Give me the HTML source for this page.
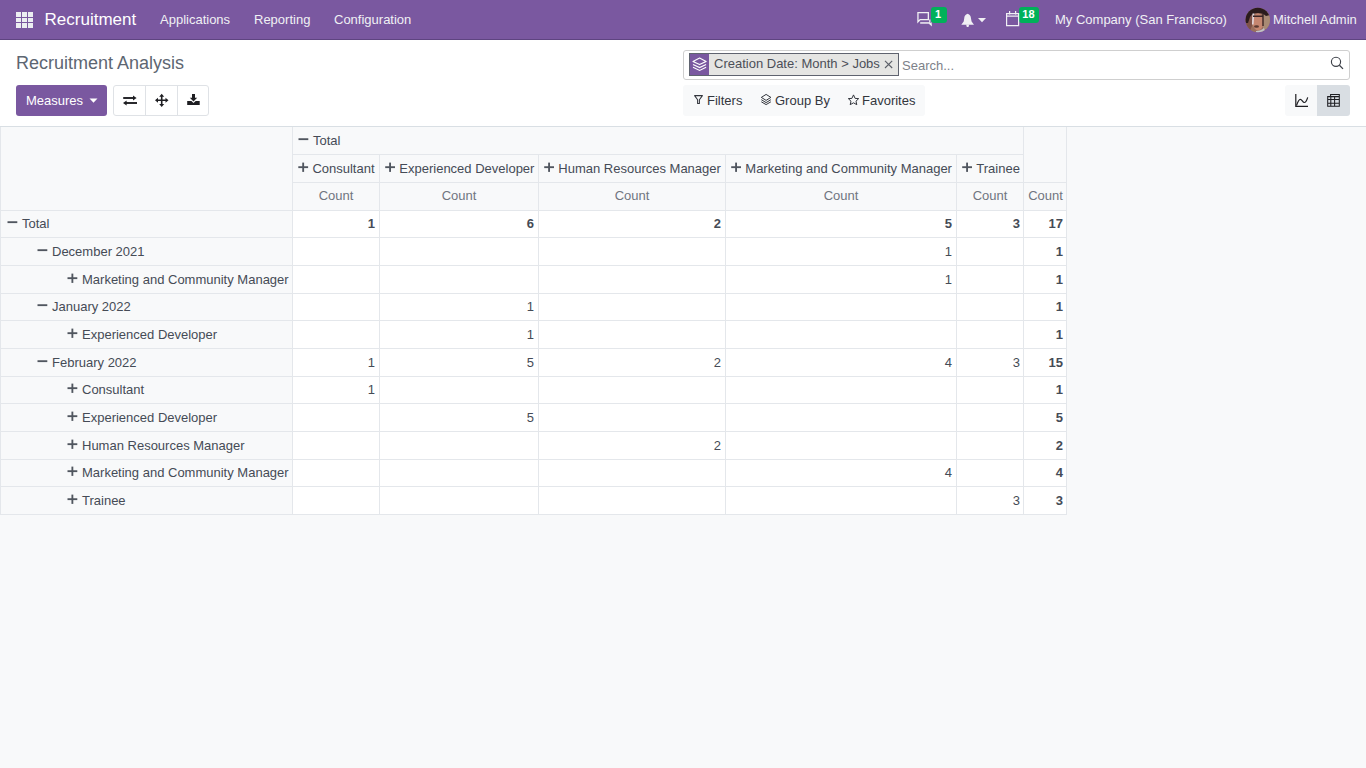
<!DOCTYPE html>
<html><head><meta charset="utf-8"><title>Recruitment Analysis</title>
<style>
html,body{margin:0;padding:0;width:1366px;height:768px;overflow:hidden;background:#f8f9fa;font-family:"Liberation Sans",sans-serif;font-size:13px;color:#454b56}
div{box-sizing:border-box}
.a{position:absolute}
.t{position:absolute;white-space:nowrap;line-height:1}
</style></head>
<body>
<div class="a" style="left:0px;top:0px;width:1366px;height:39px;background:#7a58a0"></div><div class="a" style="left:0px;top:39px;width:1366px;height:1px;background:#5e4480"></div><div class="a" style="left:16px;top:12.0px;width:5px;height:4.6px;background:#eceef2"></div><div class="a" style="left:22px;top:12.0px;width:5px;height:4.6px;background:#eceef2"></div><div class="a" style="left:28px;top:12.0px;width:5px;height:4.6px;background:#eceef2"></div><div class="a" style="left:16px;top:17.6px;width:5px;height:4.6px;background:#eceef2"></div><div class="a" style="left:22px;top:17.6px;width:5px;height:4.6px;background:#eceef2"></div><div class="a" style="left:28px;top:17.6px;width:5px;height:4.6px;background:#eceef2"></div><div class="a" style="left:16px;top:23.2px;width:5px;height:4.6px;background:#eceef2"></div><div class="a" style="left:22px;top:23.2px;width:5px;height:4.6px;background:#eceef2"></div><div class="a" style="left:28px;top:23.2px;width:5px;height:4.6px;background:#eceef2"></div><div class="t" style="left:44.6px;top:10.61px;font-size:17px;color:#fff;">Recruitment</div><div class="t" style="left:160px;top:13.00px;font-size:13px;color:#f0f0f4;">Applications</div><div class="t" style="left:254px;top:13.00px;font-size:13px;color:#f0f0f4;">Reporting</div><div class="t" style="left:334px;top:13.00px;font-size:13px;color:#f0f0f4;">Configuration</div><div class="t" style="left:1055px;top:13.00px;font-size:13px;color:#f0f0f4;">My Company (San Francisco)</div><div class="t" style="left:1273px;top:13.00px;font-size:13px;color:#f0f0f4;">Mitchell Admin</div><div class="a" style="left:930.6px;top:7px;width:16.4px;height:16px;background:#00b15a;border-radius:3px"></div><div class="t" style="left:935px;top:8.69px;font-size:11px;color:#fff;font-weight:bold">1</div><div class="a" style="left:1019px;top:7px;width:20px;height:16px;background:#00b15a;border-radius:3px"></div><div class="t" style="left:1022.3px;top:8.69px;font-size:11px;color:#fff;font-weight:bold">18</div><div class="a" style="left:0px;top:40px;width:1366px;height:86px;background:#fff"></div><div class="a" style="left:0px;top:126px;width:1366px;height:1px;background:#d9dfe4"></div><div class="t" style="left:16px;top:53.76px;font-size:18px;color:#5d6672;">Recruitment Analysis</div><div class="a" style="left:16px;top:85px;width:91px;height:31px;background:#7a58a0;border-radius:3px"></div><div class="t" style="left:26px;top:94.00px;font-size:13px;color:#fff;">Measures</div><div class="a" style="left:113px;top:85px;width:96px;height:31px;border:1px solid #dfe2e6;border-radius:3px;background:#fff"></div><div class="a" style="left:145px;top:85px;width:1px;height:31px;background:#dfe2e6"></div><div class="a" style="left:177px;top:85px;width:1px;height:31px;background:#dfe2e6"></div><div class="a" style="left:683px;top:50px;width:667px;height:30px;border:1px solid #cfcfcf;border-radius:3px;background:#fff"></div><div class="a" style="left:689px;top:53px;width:210px;height:23px;border:1px solid #5f636f;background:#e5e5e3"></div><div class="a" style="left:690px;top:54px;width:19px;height:21px;background:#7a58a0"></div><div class="t" style="left:714px;top:57.00px;font-size:13px;color:#4c4f58;">Creation Date: Month &gt; Jobs</div><div class="t" style="left:902px;top:59.00px;font-size:13px;color:#7d8189;">Search...</div><div class="a" style="left:683px;top:85px;width:242px;height:31px;background:#f8f9fa;border-radius:3px"></div><div class="t" style="left:707px;top:94.00px;font-size:13px;color:#33363d;">Filters</div><div class="t" style="left:775px;top:94.00px;font-size:13px;color:#33363d;">Group By</div><div class="t" style="left:862px;top:94.00px;font-size:13px;color:#33363d;">Favorites</div><div class="a" style="left:1285px;top:85px;width:32px;height:31px;background:#f8f9fa;border-radius:3px 0 0 3px"></div><div class="a" style="left:1317px;top:85px;width:33px;height:31px;background:#d9dee3;border-radius:0 3px 3px 0"></div><div class="a" style="left:293px;top:211px;width:773px;height:303px;background:#fff"></div><div class="a" style="left:292px;top:154px;width:732px;height:1px;background:#e4e7eb"></div><div class="a" style="left:292px;top:182px;width:775px;height:1px;background:#e4e7eb"></div><div class="a" style="left:0px;top:210px;width:1067px;height:1px;background:#e4e7eb"></div><div class="a" style="left:0px;top:237px;width:1067px;height:1px;background:#e4e7eb"></div><div class="a" style="left:0px;top:265px;width:1067px;height:1px;background:#e4e7eb"></div><div class="a" style="left:0px;top:293px;width:1067px;height:1px;background:#e4e7eb"></div><div class="a" style="left:0px;top:320px;width:1067px;height:1px;background:#e4e7eb"></div><div class="a" style="left:0px;top:348px;width:1067px;height:1px;background:#e4e7eb"></div><div class="a" style="left:0px;top:376px;width:1067px;height:1px;background:#e4e7eb"></div><div class="a" style="left:0px;top:403px;width:1067px;height:1px;background:#e4e7eb"></div><div class="a" style="left:0px;top:431px;width:1067px;height:1px;background:#e4e7eb"></div><div class="a" style="left:0px;top:459px;width:1067px;height:1px;background:#e4e7eb"></div><div class="a" style="left:0px;top:486px;width:1067px;height:1px;background:#e4e7eb"></div><div class="a" style="left:0px;top:514px;width:1067px;height:1px;background:#e4e7eb"></div><div class="a" style="left:0px;top:127px;width:1px;height:388px;background:#e4e7eb"></div><div class="a" style="left:292px;top:127px;width:1px;height:388px;background:#e4e7eb"></div><div class="a" style="left:1023px;top:127px;width:1px;height:388px;background:#e4e7eb"></div><div class="a" style="left:1066px;top:127px;width:1px;height:388px;background:#e4e7eb"></div><div class="a" style="left:379px;top:155px;width:1px;height:360px;background:#e4e7eb"></div><div class="a" style="left:538px;top:155px;width:1px;height:360px;background:#e4e7eb"></div><div class="a" style="left:725px;top:155px;width:1px;height:360px;background:#e4e7eb"></div><div class="a" style="left:956px;top:155px;width:1px;height:360px;background:#e4e7eb"></div><div class="t" style="left:313px;top:134.00px;font-size:13px;color:#454b56;">Total</div><div class="t" style="left:312.4px;top:162.00px;font-size:13px;color:#454b56;">Consultant</div><div class="t" style="left:399.3px;top:162.00px;font-size:13px;color:#454b56;">Experienced Developer</div><div class="t" style="left:558.3px;top:162.00px;font-size:13px;color:#454b56;">Human Resources Manager</div><div class="t" style="left:745.3px;top:162.00px;font-size:13px;color:#454b56;">Marketing and Community Manager</div><div class="t" style="left:976.3px;top:162.00px;font-size:13px;color:#454b56;">Trainee</div><div class="t" style="left:293px;width:86px;text-align:center;top:189.00px;font-size:13px;color:#70757f;">Count</div><div class="t" style="left:380px;width:158px;text-align:center;top:189.00px;font-size:13px;color:#70757f;">Count</div><div class="t" style="left:539px;width:186px;text-align:center;top:189.00px;font-size:13px;color:#70757f;">Count</div><div class="t" style="left:726px;width:230px;text-align:center;top:189.00px;font-size:13px;color:#70757f;">Count</div><div class="t" style="left:957px;width:66px;text-align:center;top:189.00px;font-size:13px;color:#70757f;">Count</div><div class="t" style="left:1024.5px;width:42.0px;text-align:center;top:189.00px;font-size:13px;color:#70757f;">Count</div><div class="t" style="left:22px;top:217.00px;font-size:13px;color:#454b56;">Total</div><div class="t" style="right:991px;top:217.00px;font-size:13px;color:#454b56;font-weight:bold">1</div><div class="t" style="right:832px;top:217.00px;font-size:13px;color:#454b56;font-weight:bold">6</div><div class="t" style="right:645px;top:217.00px;font-size:13px;color:#454b56;font-weight:bold">2</div><div class="t" style="right:414px;top:217.00px;font-size:13px;color:#454b56;font-weight:bold">5</div><div class="t" style="right:346px;top:217.00px;font-size:13px;color:#454b56;font-weight:bold">3</div><div class="t" style="right:303px;top:217.00px;font-size:13px;color:#454b56;font-weight:bold">17</div><div class="t" style="left:52px;top:245.00px;font-size:13px;color:#454b56;">December 2021</div><div class="t" style="right:414px;top:245.00px;font-size:13px;color:#454b56;">1</div><div class="t" style="right:303px;top:245.00px;font-size:13px;color:#454b56;font-weight:bold">1</div><div class="t" style="left:82px;top:273.00px;font-size:13px;color:#454b56;">Marketing and Community Manager</div><div class="t" style="right:414px;top:273.00px;font-size:13px;color:#454b56;">1</div><div class="t" style="right:303px;top:273.00px;font-size:13px;color:#454b56;font-weight:bold">1</div><div class="t" style="left:52px;top:300.00px;font-size:13px;color:#454b56;">January 2022</div><div class="t" style="right:832px;top:300.00px;font-size:13px;color:#454b56;">1</div><div class="t" style="right:303px;top:300.00px;font-size:13px;color:#454b56;font-weight:bold">1</div><div class="t" style="left:82px;top:328.00px;font-size:13px;color:#454b56;">Experienced Developer</div><div class="t" style="right:832px;top:328.00px;font-size:13px;color:#454b56;">1</div><div class="t" style="right:303px;top:328.00px;font-size:13px;color:#454b56;font-weight:bold">1</div><div class="t" style="left:52px;top:356.00px;font-size:13px;color:#454b56;">February 2022</div><div class="t" style="right:991px;top:356.00px;font-size:13px;color:#454b56;">1</div><div class="t" style="right:832px;top:356.00px;font-size:13px;color:#454b56;">5</div><div class="t" style="right:645px;top:356.00px;font-size:13px;color:#454b56;">2</div><div class="t" style="right:414px;top:356.00px;font-size:13px;color:#454b56;">4</div><div class="t" style="right:346px;top:356.00px;font-size:13px;color:#454b56;">3</div><div class="t" style="right:303px;top:356.00px;font-size:13px;color:#454b56;font-weight:bold">15</div><div class="t" style="left:82px;top:383.00px;font-size:13px;color:#454b56;">Consultant</div><div class="t" style="right:991px;top:383.00px;font-size:13px;color:#454b56;">1</div><div class="t" style="right:303px;top:383.00px;font-size:13px;color:#454b56;font-weight:bold">1</div><div class="t" style="left:82px;top:411.00px;font-size:13px;color:#454b56;">Experienced Developer</div><div class="t" style="right:832px;top:411.00px;font-size:13px;color:#454b56;">5</div><div class="t" style="right:303px;top:411.00px;font-size:13px;color:#454b56;font-weight:bold">5</div><div class="t" style="left:82px;top:439.00px;font-size:13px;color:#454b56;">Human Resources Manager</div><div class="t" style="right:645px;top:439.00px;font-size:13px;color:#454b56;">2</div><div class="t" style="right:303px;top:439.00px;font-size:13px;color:#454b56;font-weight:bold">2</div><div class="t" style="left:82px;top:466.00px;font-size:13px;color:#454b56;">Marketing and Community Manager</div><div class="t" style="right:414px;top:466.00px;font-size:13px;color:#454b56;">4</div><div class="t" style="right:303px;top:466.00px;font-size:13px;color:#454b56;font-weight:bold">4</div><div class="t" style="left:82px;top:494.00px;font-size:13px;color:#454b56;">Trainee</div><div class="t" style="right:346px;top:494.00px;font-size:13px;color:#454b56;">3</div><div class="t" style="right:303px;top:494.00px;font-size:13px;color:#454b56;font-weight:bold">3</div>
<svg class="a" style="left:0;top:0" width="1366" height="768" viewBox="0 0 1366 768"><path d="M917.95 12.65h10.4v7h-8.2l-2.2 2.3z" fill="none" stroke="#f0f0f4" stroke-width="1.3" stroke-linejoin="miter"/><path d="M920.2 22.2h9.8v1.5h-9.8z" fill="#f0f0f4"/><path d="M928.6 23.5l3.3 3.1-0.3-4.3z" fill="#f0f0f4"/><path d="M929.8 19.5v3" stroke="#f0f0f4" stroke-width="1.2"/><path d="M967.6 13.7C965.4 14.3 964.3 16 964.2 18.6L963.7 21.6L961.3 24.7H974L971.6 21.6L971 18.6C970.9 16 969.8 14.3 967.6 13.7z" fill="#f0f0f4"/><path d="M966.1 24.6h3.1l-0.7 2.3h-1.7z" fill="#f0f0f4"/><path d="M978 18h8l-4 4.2z" fill="#f0f0f4"/><path d="M1006.6 13.6h12v12h-12z M1006.6 16.2h12" fill="none" stroke="#f0f0f4" stroke-width="1.2"/><path d="M1009.6 11v3.5M1015.6 11v3.5" stroke="#f0f0f4" stroke-width="1.2"/><defs><clipPath id="av"><circle cx="1257.8" cy="20" r="12.2"/></clipPath></defs><g clip-path="url(#av)"><rect x="1245" y="7" width="26" height="26" fill="#9a705e"/><rect x="1263" y="12" width="8" height="17" fill="#a88a74"/><path d="M1245 14h7v12l-3 7h-4z" fill="#7e5248"/><ellipse cx="1258" cy="22" rx="5.5" ry="8.5" fill="#c58670"/><path d="M1245 17c0-6 6-10 13-10 6 0 10 3 12 8l-4 1c-2-2-5-3-8-3-4 0-6 1-8 4l-2 6-3 0z" fill="#2a1b1c"/><path d="M1252.5 13.5l1.8 0-0.8 11-1.5 0z" fill="#e4dce2"/><path d="M1253 16.3h10M1263 14v12" stroke="#3a2626" stroke-width="1.4"/><ellipse cx="1256.5" cy="26.5" rx="2.5" ry="1.2" fill="#5a3a32"/><path d="M1246 27c2 3 4 5 8 6h-9z" fill="#2a1b1c"/><path d="M1256 31c3 0 6-1 8-3l2 5h-10z" fill="#c0c2c8"/></g><path d="M89.5 98.5h8l-4 4.3z" fill="#fff"/><path d="M123.2 98h10.3" stroke="#1e1e22" stroke-width="1.9"/><path d="M133 95.6l3.6 2.4-3.6 2.6z" fill="#1e1e22"/><path d="M126 103h11" stroke="#1e1e22" stroke-width="1.9"/><path d="M126.6 100.6l-3.6 2.4 3.6 2.6z" fill="#1e1e22"/><path d="M161.7 95.5v9.5M156.5 100.3h10.5" stroke="#1e1e22" stroke-width="1.6"/><path d="M161.7 93.8l2.5 3h-5zM161.7 106.9l2.5-3h-5zM155 100.3l3-2.5v5zM168.5 100.3l-3-2.5v5z" fill="#1e1e22"/><path d="M192 93.9h3v3.9h2.2l-3.7 3.7-3.7-3.7h2.2z" fill="#1e1e22"/><path d="M187.2 101h4.2l2.1 2 2.1-2h4.1v3.9h-12.5z" fill="#1e1e22"/><path d="M693 61.4l6.6-3.3 6.5 3.3-6.5 3.2z" fill="none" stroke="#fff" stroke-width="1.15" stroke-linejoin="round"/><path d="M693 64.4l6.6 3.1 6.5-3.1M693 67.3l6.6 3.1 6.5-3.1" fill="none" stroke="#fff" stroke-width="1.15"/><path d="M885 60.8l7.2 7.2M892.2 60.8l-7.2 7.2" stroke="#5b5f68" stroke-width="1.1"/><circle cx="1336" cy="61.8" r="4.6" fill="none" stroke="#3d4048" stroke-width="1.15"/><path d="M1339.4 65.3l3.6 3.6" stroke="#3d4048" stroke-width="1.3"/><path d="M694.6 95.6h7.8l-3 4.2v3.7h-1.8v-3.7z" fill="none" stroke="#33363d" stroke-width="1.05" stroke-linejoin="round"/><path d="M761.3 97.4l4.8-3 4.8 3-4.8 3z" fill="none" stroke="#33363d" stroke-width="1"/><path d="M761.3 99.7l4.8 2.9 4.8-2.9M761.3 101.8l4.8 2.8 4.8-2.8" fill="none" stroke="#33363d" stroke-width="1"/><path d="M853.5 94.9l1.6 3.5 3.6 0.2-2.7 2.6 0.8 3.5-3.3-1.9-3.3 1.9 0.8-3.5-2.7-2.6 3.6-0.2z" fill="none" stroke="#33363d" stroke-width="1" stroke-linejoin="round"/><path d="M1295.8 94v12.4h12.2" fill="none" stroke="#1e1e22" stroke-width="1.2"/><path d="M1296.5 105.5c1-3 2.2-6.2 3.8-6.2 1.7 0 2.3 3.2 4 3.2 1.6 0 2.5-2.2 3.4-5.2" fill="none" stroke="#1e1e22" stroke-width="1.2"/><path d="M1327.7 96.6h11.6v9.6h-11.6z M1330.6 96.6v-2.1h8.7v2.1 M1327.7 99.4h11.6M1327.7 103.3h11.6M1330.8 96.6v9.6M1334.6 96.6v9.6" fill="none" stroke="#1e1e22" stroke-width="1.05"/><rect x="298.50" y="138.25" width="9.8" height="1.85" fill="#50565f"/><rect x="298.30" y="166.25" width="9.8" height="1.85" fill="#50565f"/><rect x="302.25" y="162.60" width="1.85" height="9.3" fill="#50565f"/><rect x="385.20" y="166.25" width="9.8" height="1.85" fill="#50565f"/><rect x="389.15" y="162.60" width="1.85" height="9.3" fill="#50565f"/><rect x="544.20" y="166.25" width="9.8" height="1.85" fill="#50565f"/><rect x="548.15" y="162.60" width="1.85" height="9.3" fill="#50565f"/><rect x="731.20" y="166.25" width="9.8" height="1.85" fill="#50565f"/><rect x="735.15" y="162.60" width="1.85" height="9.3" fill="#50565f"/><rect x="962.20" y="166.25" width="9.8" height="1.85" fill="#50565f"/><rect x="966.15" y="162.60" width="1.85" height="9.3" fill="#50565f"/><rect x="7.50" y="221.25" width="9.8" height="1.85" fill="#50565f"/><rect x="37.50" y="249.25" width="9.8" height="1.85" fill="#50565f"/><rect x="67.50" y="277.25" width="9.8" height="1.85" fill="#50565f"/><rect x="71.45" y="273.60" width="1.85" height="9.3" fill="#50565f"/><rect x="37.50" y="304.25" width="9.8" height="1.85" fill="#50565f"/><rect x="67.50" y="332.25" width="9.8" height="1.85" fill="#50565f"/><rect x="71.45" y="328.60" width="1.85" height="9.3" fill="#50565f"/><rect x="37.50" y="360.25" width="9.8" height="1.85" fill="#50565f"/><rect x="67.50" y="387.25" width="9.8" height="1.85" fill="#50565f"/><rect x="71.45" y="383.60" width="1.85" height="9.3" fill="#50565f"/><rect x="67.50" y="415.25" width="9.8" height="1.85" fill="#50565f"/><rect x="71.45" y="411.60" width="1.85" height="9.3" fill="#50565f"/><rect x="67.50" y="443.25" width="9.8" height="1.85" fill="#50565f"/><rect x="71.45" y="439.60" width="1.85" height="9.3" fill="#50565f"/><rect x="67.50" y="470.25" width="9.8" height="1.85" fill="#50565f"/><rect x="71.45" y="466.60" width="1.85" height="9.3" fill="#50565f"/><rect x="67.50" y="498.25" width="9.8" height="1.85" fill="#50565f"/><rect x="71.45" y="494.60" width="1.85" height="9.3" fill="#50565f"/></svg>
</body></html>
